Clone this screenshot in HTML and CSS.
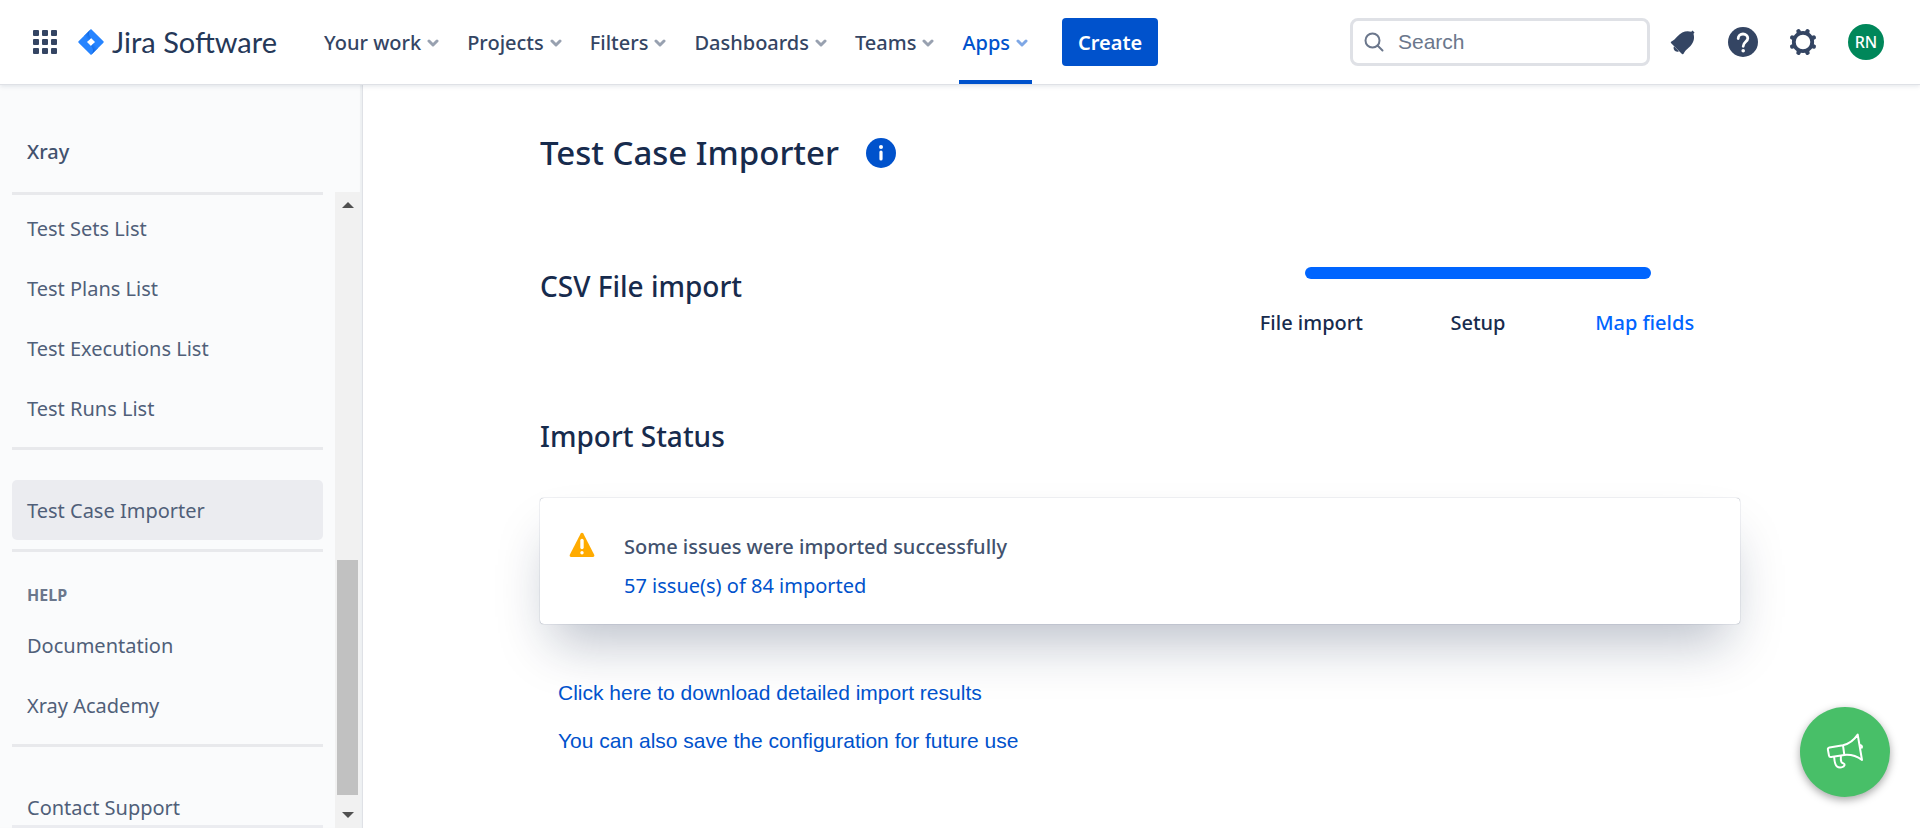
FILE: index.html
```
<!DOCTYPE html>
<html lang="en">
<head>
<meta charset="utf-8">
<meta name="viewport" content="width=device-width, initial-scale=1">
<title>Test Case Importer</title>
<link rel="stylesheet" href="styles.css">
</head>
<body>
<svg class="defs" aria-hidden="true">
  <symbol id="chevron" viewBox="0 0 14 10"><path d="M3 3l4 4 4-4" fill="none" stroke="currentColor" stroke-width="3" stroke-linecap="round" stroke-linejoin="round"/></symbol>
</svg>
<header class="topbar">
  <button class="icon-btn switcher" aria-label="Switch apps">
    <svg width="24" height="24" viewBox="0 0 24 24" fill="currentColor"><rect width="6" height="6" rx="1"/><rect x="9" width="6" height="6" rx="1"/><rect x="18" width="6" height="6" rx="1"/><rect y="9" width="6" height="6" rx="1"/><rect x="9" y="9" width="6" height="6" rx="1"/><rect x="18" y="9" width="6" height="6" rx="1"/><rect y="18" width="6" height="6" rx="1"/><rect x="9" y="18" width="6" height="6" rx="1"/><rect x="18" y="18" width="6" height="6" rx="1"/></svg>
  </button>
  <a class="brand" href="#">
    <svg width="26" height="26" viewBox="0 0 26 26" aria-hidden="true">
      <defs>
        <linearGradient id="g1" x1="1" y1="0" x2="0.3" y2="0.8"><stop offset="0" stop-color="#0052cc"/><stop offset="1" stop-color="#2684ff"/></linearGradient>
        <linearGradient id="g2" x1="0" y1="1" x2="0.7" y2="0.2"><stop offset="0" stop-color="#0052cc"/><stop offset="1" stop-color="#2684ff"/></linearGradient>
      </defs>
      <path d="M13 0l12.400 12.300a1 1 0 0 1 0 1.400L13 26 .6 13.700a1 1 0 0 1 0-1.400zM13 9l-4 4 4 4 4-4z" fill="#2684ff" fill-rule="evenodd"/>
      <path d="M13 9C10.300 6.300 10.300 2.700 13 0L6 7l4.500 4.500z" fill="url(#g1)"/>
      <path d="M13 17c2.700 2.700 2.700 6.300 0 9l7-7-4.500-4.500z" fill="url(#g2)"/>
    </svg>
    <span>Jira Software</span>
  </a>
  <nav class="menu" aria-label="Primary">
    <button>Your work<svg><use href="#chevron"/></svg></button>
    <button>Projects<svg><use href="#chevron"/></svg></button>
    <button>Filters<svg><use href="#chevron"/></svg></button>
    <button>Dashboards<svg><use href="#chevron"/></svg></button>
    <button>Teams<svg><use href="#chevron"/></svg></button>
    <button class="current">Apps<svg><use href="#chevron"/></svg></button>
  </nav>
  <button class="create">Create</button>
  <div class="tools">
    <label class="search">
      <svg width="20" height="20" viewBox="0 0 20 20" fill="none" stroke="#6b778c" stroke-width="2" stroke-linecap="round"><circle cx="8.500" cy="8.500" r="7"/><path d="M13.500 13.500l5 5"/></svg>
      <input type="search" placeholder="Search" aria-label="Search">
    </label>
    <button class="icon-btn" aria-label="Notifications">
      <svg width="30" height="30" viewBox="0 0 30 30" fill="currentColor"><path d="M3.200 16.200c-.7-.7-.5-1.300.3-1.700 2.200-1 3.800-2.600 5.800-4.900 4.200-4.800 8.900-6.400 14-4.900l1.200-1.100 2 2-1 1.200c1.500 5.100 0 9.800-4.900 14-2.300 2-3.900 3.600-4.900 5.800-.4.800-1 1-1.700.3z"/><path d="M6 19.300l4.900 4.900c-2.600 1.900-6.600-1.500-4.900-4.900z"/></svg>
    </button>
    <button class="icon-btn" aria-label="Help">
      <svg width="30" height="30" viewBox="0 0 30 30"><circle cx="15" cy="15" r="15" fill="currentColor"/><path d="M10.200 11.500c0-2.600 2.100-4.500 4.800-4.500s4.800 1.900 4.800 4.300c0 3.500-4.600 3.600-4.600 8" fill="none" stroke="#fff" stroke-width="2.800" stroke-linecap="round"/><circle cx="15.200" cy="23.800" r="1.800" fill="#fff"/></svg>
    </button>
    <button class="icon-btn" aria-label="Settings">
      <svg width="30" height="30" viewBox="0 0 30 30" fill="none" stroke="currentColor"><circle cx="15" cy="15" r="9.200" stroke-width="3.800"/><path d="M10.800 5l-.3-.8M19.200 5l.3-.8M25 10.800l.8-.3M25 19.200l.8.300M19.200 25l.3.800M10.800 25l-.3.800M5 19.200l-.8.300M5 10.800l-.8-.3" stroke-width="4.400" stroke-linecap="round"/></svg>
    </button>
    <button class="avatar" aria-label="Your profile">RN</button>
  </div>
</header>
<div class="layout">
  <aside class="sidebar">
    <h2 class="project">Xray</h2>
    <div class="scroller">
      <nav class="side-nav" aria-label="Xray">
        <hr>
        <a href="#">Test Sets List</a>
        <a href="#">Test Plans List</a>
        <a href="#">Test Executions List</a>
        <a href="#">Test Runs List</a>
        <hr class="section">
        <a class="selected" href="#" aria-current="page">Test Case Importer</a>
        <hr class="rule">
        <h3>HELP</h3>
        <a href="#">Documentation</a>
        <a href="#">Xray Academy</a>
        <hr class="section">
        <a href="#">Contact Support</a>
      </nav>
      <div class="scrollbar" aria-hidden="true">
        <svg width="12" height="6" viewBox="0 0 12 6"><path d="M6 0l6 6H0z" fill="#505050"/></svg>
        <div class="track"><div class="thumb"></div></div>
        <svg width="12" height="6" viewBox="0 0 12 6"><path d="M6 6l6-6H0z" fill="#505050"/></svg>
      </div>
    </div>
  </aside>
  <main>
    <div class="title">
      <h1>Test Case Importer</h1>
      <button class="icon-btn info" aria-label="Information">
        <svg width="30" height="30" viewBox="0 0 30 30"><circle cx="15" cy="15" r="15" fill="#0052cc"/><circle cx="15" cy="9" r="2" fill="#fff"/><path d="M15 14v7" stroke="#fff" stroke-width="3.200" stroke-linecap="round"/></svg>
      </button>
    </div>
    <div class="step-row">
      <h2>CSV File import</h2>
      <div class="tracker">
        <div class="bar"></div>
        <ol>
          <li>File import</li>
          <li>Setup</li>
          <li class="active">Map fields</li>
        </ol>
      </div>
    </div>
    <h2>Import Status</h2>
    <section class="card">
      <svg width="26" height="26" viewBox="0 0 26 26" aria-hidden="true"><path d="M11.700 1.500c.6-1.100 2-1.100 2.600 0l10.900 21.300c.5 1-.1 2.200-1.300 2.200H2.100c-1.200 0-1.800-1.200-1.300-2.200z" fill="#ffab00"/><path d="M13 8.500v7" stroke="#fff" stroke-width="3.400" stroke-linecap="round"/><circle cx="13" cy="20.800" r="1.700" fill="#fff"/></svg>
      <div>
        <p>Some issues were imported successfully</p>
        <a href="#">57 issue(s) of 84 imported</a>
      </div>
    </section>
    <div class="links">
      <a href="#">Click here to download detailed import results</a>
      <a href="#">You can also save the configuration for future use</a>
    </div>
  </main>
</div>
<button class="feedback" aria-label="Give feedback">
  <svg width="40" height="40" viewBox="0 0 40 40" fill="none" stroke="#fff" stroke-width="2" stroke-linecap="round" stroke-linejoin="round"><path d="M18 13.300L4.500 15.400Q2.600 15.800 2.900 17.600L4 23.600Q4.300 25.300 6.200 25L19.300 22.900zM18 13.300Q27 11 32.700 2.600L37 28Q29 22 19.300 22.900M9.200 25.500c.3 4 1 7.500 2.800 9 2.200 1.800 7 1 7.600-1.400.4-1.600-2.300-1.400-3.300-3.400-.6-1.500-.6-3-.4-5M35.500 13.300q2 .5 1.300 2.300"/></svg>
</button>
</body>
</html>
```
FILE: styles.css
```
* { box-sizing: border-box; }
body {
  margin: 0;
  height: 100vh;
  display: flex;
  flex-direction: column;
  overflow: hidden;
  background: #fff;
  color: #172b4d;
  font: 20px/30px "Noto Sans", "Open Sans", sans-serif;
}
h1, h2, h3, p, ol { margin: 0; padding: 0; font-weight: 500; }
a { color: #0052cc; text-decoration: none; }
button { border: 0; padding: 0; background: none; font: inherit; color: inherit; cursor: pointer; }
svg { display: block; flex: none; }
.defs { position: absolute; width: 0; height: 0; }

.topbar {
  position: relative;
  z-index: 1;
  flex: none;
  display: flex;
  align-items: center;
  height: 84px;
  padding: 0 36px 0 33px;
  color: #344563;
  box-shadow: 0 1px 0 #dfe1e6, 0 2px 5px rgba(9, 30, 66, .12);
}
.brand {
  display: flex;
  align-items: center;
  gap: 8px;
  margin: 0 44px 0 21px;
  color: #253858;
  font: 29px/36px Lato, sans-serif;
}
.menu { display: flex; gap: 21px; align-self: stretch; }
.menu button {
  display: flex;
  align-items: center;
  gap: 5px;
  padding: 6px 3px 0;
  border-bottom: 4px solid transparent;
  font-weight: 500;
}
.menu svg { width: 14px; height: 10px; opacity: .5; }
.menu .current { color: #0052cc; border-color: #0052cc; }
.create {
  height: 48px;
  margin-left: 30px;
  padding: 2px 16px 0;
  border-radius: 4px;
  background: #0052cc;
  color: #fff;
  font-weight: 600;
}
.tools { display: flex; align-items: center; gap: 30px; margin-left: auto; }
.search {
  display: flex;
  align-items: center;
  gap: 14px;
  width: 300px;
  height: 48px;
  margin-right: -12px;
  padding: 0 11px;
  border: 3px solid #dfe1e6;
  border-radius: 8px;
}
.search input {
  min-width: 0;
  flex: 1;
  padding: 0;
  border: 0;
  outline: 0;
  background: none;
  color: #172b4d;
  font: 21px/30px "Liberation Sans", Arial, sans-serif;
}
.search input::placeholder { color: #6b778c; opacity: 1; }
.avatar {
  width: 36px;
  height: 36px;
  border-radius: 50%;
  background: #00875a;
  color: #fff;
  font-size: 16px;
  font-weight: 500;
}

.layout { flex: 1; min-height: 0; display: flex; }
.sidebar {
  flex: none;
  display: flex;
  flex-direction: column;
  width: 363px;
  margin-right: -3px;
  background: #fafbfc;
  border-right: 1px solid #dfe1e6;
  box-shadow: inset -2px 0 1px rgba(9, 30, 66, .05);
}
.project { padding: 53px 27px 25px; color: #42526e; font-size: 20px; line-height: 30px; }
.scroller {
  flex: 1;
  min-height: 0;
  display: flex;
  justify-content: space-between;
  padding: 0 2px 0 12px;
}
.side-nav {
  width: 311px;
  overflow: hidden;
  border-bottom: 3px solid #ebecf0;
}
.side-nav hr { height: 3px; margin: 0 0 3px; border: 0; background: #e8e9ec; }
.side-nav hr.section { margin: 9px 0 30px; }
.side-nav hr.rule { margin: 9px 0 0; }
.side-nav a {
  display: block;
  padding: 16px 15px 14px;
  border-radius: 5px;
  color: #505f79;
}
.side-nav .selected { background: #ebecf0; }
.side-nav h3 { padding: 33px 15px 10px; color: #6b778c; font-size: 16px; line-height: 20px; font-weight: 700; }
.scrollbar {
  display: flex;
  flex-direction: column;
  align-items: center;
  width: 25px;
  padding: 10px 0;
  background: #f1f1f1;
}
.track { flex: 1; width: 21px; display: flex; flex-direction: column; justify-content: flex-end; padding-bottom: 17px; }
.thumb { height: 40%; background: #c1c1c1; }

main {
  flex: 1;
  width: 100%;
  max-width: 1200px;
  margin: 0 auto;
  padding-top: 45px;
}
.title { display: flex; align-items: center; gap: 27px; }
h1 { font-size: 33px; line-height: 48px; }
main h2 { font-size: 28px; line-height: 36px; }
.step-row { display: flex; justify-content: space-between; align-items: flex-start; padding: 90px 12px 0 0; margin-bottom: 80px; }
.step-row h2 { padding-top: 1px; }
.tracker { width: 500px; }
.bar { height: 12px; margin: 0 77px 0 77px; border-radius: 6px; background: #0065ff; }
ol { display: grid; grid-template-columns: repeat(3, 1fr); padding-top: 29px; list-style: none; text-align: center; }
.active { color: #0065ff; }
.card {
  display: flex;
  gap: 29px;
  margin-top: 44px;
  padding: 34px 29px 23px;
  border-radius: 4px;
  box-shadow: 0 0 1px rgba(9, 30, 66, .6), 0 30px 54px -12px rgba(9, 30, 66, .28);
}
.card p { color: #42526e; margin-bottom: 9px; }
.links {
  display: flex;
  flex-direction: column;
  align-items: flex-start;
  gap: 18px;
  padding: 54px 18px;
  font: 21px/30px "Liberation Sans", Arial, sans-serif;
}
.feedback {
  position: fixed;
  right: 30px;
  bottom: 31px;
  display: grid;
  place-items: center;
  width: 90px;
  height: 90px;
  border-radius: 50%;
  background: #48bf68;
  box-shadow: 0 3px 8px rgba(0, 0, 0, .35);
}
```
